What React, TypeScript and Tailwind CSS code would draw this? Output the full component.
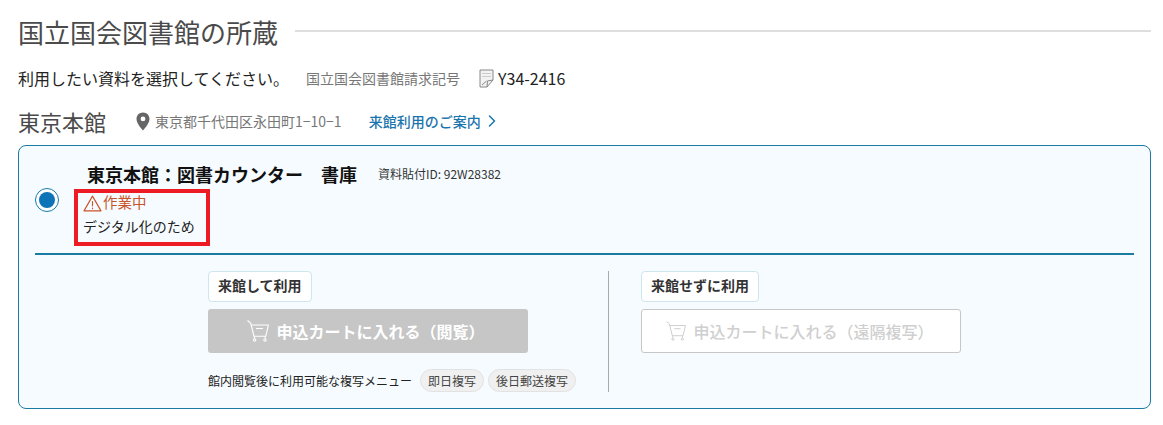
import { ChevronRight } from "lucide-react";

const FONT = "font-['Noto_Sans_CJK_JP','Noto_Sans',sans-serif]";

function CartIcon({ className }: { className?: string }) {
    return (
        <svg viewBox="0 0 22 22" fill="none" stroke="currentColor" strokeWidth="1.1" className={className}>
            <path d="M0.5 0.5 L3.6 3 L7 16.2 H18.8 L21.4 5 H4.2" />
            <path d="M9 8.5 H16" />
            <path d="M7.4 16.2 V18.5 M18.2 16.2 V18.5" />
            <circle cx="7.6" cy="20" r="1.2" />
            <circle cx="18" cy="20" r="1.2" />
        </svg>
    );
}

function NoteIcon() {
    return (
        <svg viewBox="0 0 15 19" fill="none" className="w-[15px] h-[19px]">
            <path d="M1 1 H14 V11 L8 18 H1 Z" stroke="#888" strokeWidth="1" fill="#f2f2f2" />
            <path d="M14 11 L8.5 12 L8 18" stroke="#888" strokeWidth="1" />
            <path d="M3 4.5 H12 M3 7.5 H12" stroke="#ccc" strokeWidth="1" />
            <path d="M3 16 L7.5 12" stroke="#888" strokeWidth="1" />
        </svg>
    );
}

function PinIcon() {
    return (
        <svg viewBox="0 0 14 19" className="w-[14px] h-[19px]">
            <path
                fillRule="evenodd"
                fill="#666"
                d="M7 0.5 C3.2 0.5 0.5 3.3 0.5 6.9 C0.5 11 5 16 7 18.5 C9 16 13.5 11 13.5 6.9 C13.5 3.3 10.8 0.5 7 0.5 Z M7 4.5 A2.4 2.4 0 1 1 7 9.3 A2.4 2.4 0 1 1 7 4.5 Z"
            />
        </svg>
    );
}

function WarningIcon() {
    return (
        <svg viewBox="0 0 20 18" fill="none" stroke="#c9542a" strokeWidth="1.2" className="w-[19px] h-[17px]">
            <path d="M10 1.2 L19 16.8 H1 Z" strokeLinejoin="round" />
            <path d="M10 6.5 V12" />
            <path d="M10 13.4 V15" />
        </svg>
    );
}

function Label({ children }: { children: string }) {
    return (
        <span className="inline-block h-[31px] px-[9px] bg-white border border-[#cfe6ee] rounded-[4px] text-[14px] leading-[27px] font-bold text-[#333]">
            {children}
        </span>
    );
}

function Chip({ children }: { children: string }) {
    return (
        <span className="block h-[23px] px-[7px] bg-[#f0f0f0] border border-[#e2e2e2] rounded-full text-[12px] leading-[21px] text-[#444]">
            {children}
        </span>
    );
}

export default function App() {
    return (
        <div className={`${FONT} w-[1163px] h-[425px] bg-white overflow-hidden pl-[18px] pr-[12px] pt-[15px]`}>
            {/* Section heading */}
            <div className="flex items-center h-[34px]">
                <h2 className="text-[26px] leading-[34px] font-normal text-[#4a4a4a] whitespace-nowrap">国立国会図書館の所蔵</h2>
                <div className="flex-1 h-[2px] bg-[#dedede] ml-[17px] -mt-[2px]" />
            </div>

            <div className="flex items-center h-[24px] mt-[17px] whitespace-nowrap">
                <span className="text-[16px] text-[#222]">利用したい資料を選択してください。</span>
                <span className="ml-[17px] text-[14px] text-[#777]">国立国会図書館請求記号</span>
                <span className="ml-[19px]"><NoteIcon /></span>
                <span className="ml-[4px] text-[16px] text-[#222]">Y34-2416</span>
            </div>

            <div className="flex items-center h-[28px] mt-[17px] whitespace-nowrap">
                <span className="text-[22px] text-[#4a4a4a]">東京本館</span>
                <span className="ml-[30px] flex"><PinIcon /></span>
                <span className="ml-[5px] text-[14px] text-[#777]">東京都千代田区永田町1−10−1</span>
                <span className="ml-[27px] text-[14px] font-medium text-[#1a75ad]">来館利用のご案内</span>
                <ChevronRight className="ml-[1px] w-[20px] h-[20px] text-[#1a75ad]" strokeWidth={1.8} />
            </div>

            {/* Holding card */}
            <div className="relative mt-[10px] h-[264px] border border-[#1a7ba3] rounded-[8px] bg-[#f5fbff] px-[16px]">
                <div className="flex h-[109px] border-b-2 border-[#1a7ba3]">
                    <div className="mt-[42px] w-[24px] h-[24px] rounded-full border-[1.5px] border-[#1a7ba3] bg-white flex items-center justify-center shrink-0">
                        <div className="w-[16px] h-[16px] rounded-full bg-[#0f73b8]" />
                    </div>
                    <div className="ml-[25px]">
                        <div className="flex items-center h-[24px] mt-[16px] ml-[3px] whitespace-nowrap">
                            <span className="text-[18px] font-bold text-[#111]">東京本館：図書カウンター　書庫</span>
                            <span className="ml-[21px] text-[12px] text-[#333]">資料貼付ID: 92W28382</span>
                        </div>
                        <div className="flex items-center h-[22px] mt-[6px] -ml-[1px]">
                            <WarningIcon />
                            <span className="ml-[1px] text-[14.5px] leading-[18px] text-[#c9542a] -mt-[3px]">作業中</span>
                        </div>
                        <div className="-ml-[1px] mt-[1px] text-[14px] leading-[22px] text-[#222]">デジタル化のため</div>
                    </div>
                </div>

                <div className="flex mt-[16px]">
                    <div className="ml-[173px] w-[400px]">
                        <Label>来館して利用</Label>
                        <div className="mt-[7px] w-[320px] h-[44px] bg-[#c6c6c6] rounded-[3px] flex items-center justify-center pr-[4px] text-white">
                            <CartIcon className="w-[22px] h-[22px] mr-[7px]" />
                            <span className="text-[16px] font-bold">申込カートに入れる（閲覧）</span>
                        </div>
                        <div className="flex items-center mt-[16px] whitespace-nowrap">
                            <span className="text-[12px] text-[#222]">館内閲覧後に利用可能な複写メニュー</span>
                            <span className="ml-[8px]"><Chip>即日複写</Chip></span>
                            <span className="ml-[4px]"><Chip>後日郵送複写</Chip></span>
                        </div>
                    </div>
                    <div className="w-px h-[121px] bg-[#aaa]" />
                    <div className="ml-[32px]">
                        <Label>来館せずに利用</Label>
                        <div className="mt-[7px] w-[320px] h-[44px] bg-white border border-[#c6c6c6] rounded-[3px] flex items-center justify-center pr-[2px] text-[#cfcfcf]">
                            <CartIcon className="w-[20px] h-[20px] mr-[7px]" />
                            <span className="text-[16px] font-medium">申込カートに入れる（遠隔複写）</span>
                        </div>
                    </div>
                </div>

                {/* Red annotation box */}
                <div className="absolute left-[55px] top-[43px] w-[136px] h-[57px] border-[4px] border-[#ed1c24]" />
            </div>
        </div>
    );
}
